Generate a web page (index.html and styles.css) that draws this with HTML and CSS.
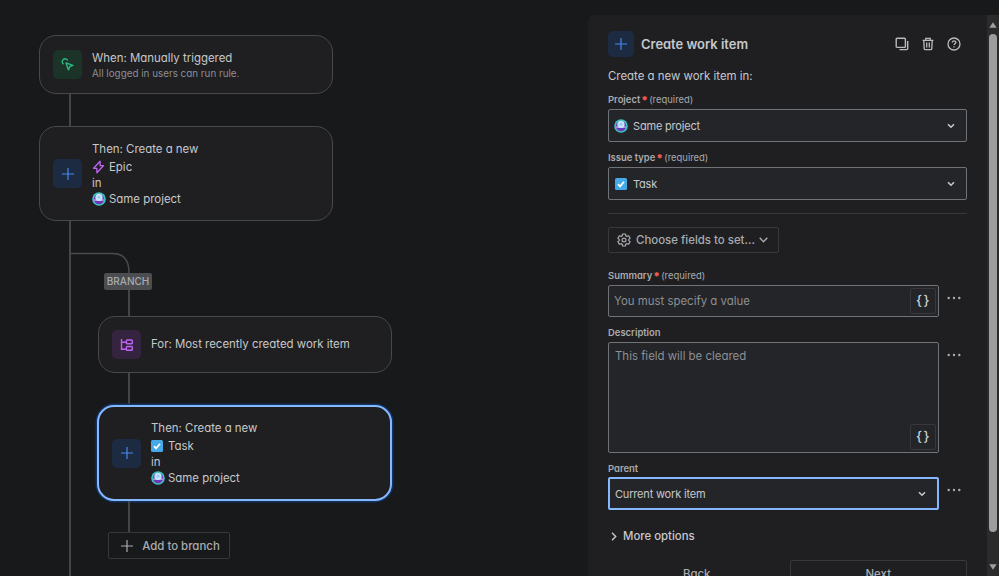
FILE: index.html
```html
<!DOCTYPE html>
<html lang="en">
<head>
<meta charset="utf-8">
<title>Automation rule</title>
<link rel="stylesheet" href="styles.css">
</head>
<body>
<svg class="defs" aria-hidden="true">
  <defs>
    <symbol id="avatar" viewBox="0 0 14 14"><circle cx="7" cy="7" r="6.8" fill="#3cc5c0"/><circle cx="7" cy="7" r="5.2" fill="#7040bd"/><path d="M1.9 7.2a5.1 5.1 0 0 0 10.2 0z" fill="#b48ce6"/><path d="M2.3 9a5.1 5.1 0 0 0 9.4 0z" fill="#6939b5"/><circle cx="7" cy="5.4" r="3.6" fill="#c3e4fa"/><circle cx="7" cy="5.2" r="1.4" fill="#9cc6ee"/></symbol>
    <symbol id="task" viewBox="0 0 12 12"><rect width="12" height="12" rx="1.5" fill="#45a9ea"/><path d="M3 6.2 5.1 8.4 9 3.8" fill="none" stroke="#fff" stroke-width="1.7"/></symbol>
    <symbol id="epic" viewBox="0 0 12 14"><path d="M7.6 1.2v4.5h3.3L4.4 12.8V8.3H1.1z" fill="none" stroke="#bf63f3" stroke-width="1.3" stroke-linejoin="round"/></symbol>
    <symbol id="plus" viewBox="0 0 12 12"><path d="M6 0v12M0 6h12" fill="none" stroke="currentColor" stroke-width="1.2"/></symbol>
    <symbol id="chev" viewBox="0 0 8 6"><path d="M1 1.2 4 4.2 7 1.2" fill="none" stroke="currentColor" stroke-width="1.6"/></symbol>
  </defs>
</svg>
<div class="app">
  <main class="canvas">
    <section class="card trigger">
      <span class="tile green"><svg width="14" height="14" viewBox="0 0 14 14" fill="none" stroke="currentColor" stroke-width="1.4" stroke-linejoin="round"><path d="M2.6 6.2A2.9 2.9 0 1 1 6.8 2.6"/><path d="m5 4.8 6.9 2.6-3.2 1.3-1.3 3.2z"/></svg></span>
      <div class="copy"><span class="t">When: Manually triggered</span><small>All logged in users can run rule.</small></div>
    </section>
    <div class="link first"></div>
    <section class="card create">
      <span class="tile blue"><svg width="12" height="12"><use href="#plus"/></svg></span>
      <div class="copy lines"><span class="t">Then: Create a new</span><span class="row"><svg width="13" height="14"><use href="#epic"/></svg>Epic</span><span class="row">in</span><span class="row"><svg class="av" width="14" height="14"><use href="#avatar"/></svg>Same project</span></div>
    </section>
    <div class="branch">
      <svg class="fork" width="60" height="52" viewBox="0 0 60 52" fill="none" stroke="#4a4b4e" stroke-width="1.5"><path d="M0 32.6h41.7q16.3 0 16.3 19.4"/></svg>
      <span class="badge">BRANCH</span>
      <div class="link second"></div>
      <section class="card for">
        <span class="tile purple"><svg width="14" height="14" viewBox="0 0 14 14" fill="none" stroke="currentColor" stroke-width="1.4"><path d="M1.5 1v10.2h4.7M1.5 4.2h4.7"/><rect x="6.4" y="2" width="5.9" height="3.7" rx=".8"/><rect x="6.4" y="8.5" width="5.9" height="3.7" rx=".8"/></svg></span>
        <div class="copy"><span class="t">For: Most recently created work item</span></div>
      </section>
      <div class="link third"></div>
      <section class="card create selected">
        <span class="tile blue"><svg width="12" height="12"><use href="#plus"/></svg></span>
        <div class="copy lines"><span class="t">Then: Create a new</span><span class="row"><svg class="tk" width="12" height="12"><use href="#task"/></svg>Task</span><span class="row">in</span><span class="row"><svg class="av" width="14" height="14"><use href="#avatar"/></svg>Same project</span></div>
      </section>
      <div class="link fourth"></div>
      <button class="add"><svg width="12" height="12"><use href="#plus"/></svg>Add to branch</button>
    </div>
  </main>
  <aside class="panel">
    <header>
      <span class="tile blue small"><svg width="12" height="12"><use href="#plus"/></svg></span>
      <h1>Create work item</h1>
      <div class="tools">
        <svg width="14" height="14" viewBox="0 0 14 14" fill="none" stroke="currentColor" stroke-width="1.4"><rect x="1.2" y="1.2" width="9.2" height="9.2" rx="1"/><path d="M12.7 4v7.6a1 1 0 0 1-1 1H4.5"/></svg>
        <svg width="14" height="14" viewBox="0 0 14 14" fill="none" stroke="currentColor" stroke-width="1.3"><path d="M1.6 3.3h10.8M4.8 3V1.3h4.4V3M2.8 3.5l.4 8.2q.1 1 1 1h5.6q.9 0 1-1l.4-8.2M5.7 5.5v5M8.3 5.5v5"/></svg>
        <svg width="14" height="14" viewBox="0 0 14 14" fill="none" stroke="currentColor" stroke-width="1.3"><circle cx="7" cy="7" r="6"/><path d="M5.2 5.6C5.2 3.2 8.8 3.3 8.8 5.4c0 1.3-1.8 1.3-1.8 2.7M7 9.2v1.3"/></svg>
      </div>
    </header>
    <p class="intro">Create a new work item in:</p>
    <label class="l-project">Project<b>*</b><i>(required)</i></label>
    <div class="field select"><svg width="14" height="14"><use href="#avatar"/></svg><span>Same project</span><svg class="chev" width="8" height="6"><use href="#chev"/></svg></div>
    <label class="l-issue">Issue type<b>*</b><i>(required)</i></label>
    <div class="field select"><svg class="check" width="12" height="12"><use href="#task"/></svg><span>Task</span><svg class="chev" width="8" height="6"><use href="#chev"/></svg></div>
    <hr>
    <button class="choose"><svg width="14" height="14" viewBox="0 0 14 14" fill="none" stroke="currentColor" stroke-width="1.2" stroke-linejoin="round"><path d="M5.6 1h2.8l.4 1.8 1.1.6 1.8-.6 1.4 2.4L11.8 6.4v1.2l1.3 1.2-1.4 2.4-1.8-.6-1.1.6-.4 1.8H5.6l-.4-1.8-1.1-.6-1.8.6L.9 8.8l1.3-1.2V6.4L.9 5.2l1.4-2.4 1.8.6 1.1-.6z"/><circle cx="7" cy="7" r="1.9"/></svg><span>Choose fields to set...</span><svg class="wide" width="9" height="6" viewBox="0 0 9 6"><path d="M.7.8 4.5 4.7 8.3.8" fill="none" stroke="currentColor" stroke-width="1.4"/></svg></button>
    <label class="l-summary">Summary<b>*</b><i>(required)</i></label>
    <div class="line"><div class="field input"><span>You must specify a value</span><em>{}</em></div><svg class="dots" width="14" height="4" viewBox="0 0 14 4" fill="currentColor"><circle cx="1.7" cy="2" r="1.2"/><circle cx="7" cy="2" r="1.2"/><circle cx="12.3" cy="2" r="1.2"/></svg></div>
    <label class="l-desc">Description</label>
    <div class="line"><div class="field area"><span>This field will be cleared</span><em>{}</em></div><svg class="dots" width="14" height="4" viewBox="0 0 14 4" fill="currentColor"><circle cx="1.7" cy="2" r="1.2"/><circle cx="7" cy="2" r="1.2"/><circle cx="12.3" cy="2" r="1.2"/></svg></div>
    <label class="l-parent">Parent</label>
    <div class="line"><div class="field select focus"><span>Current work item</span><svg class="chev" width="8" height="6"><use href="#chev"/></svg></div><svg class="dots" width="14" height="4" viewBox="0 0 14 4" fill="currentColor"><circle cx="1.7" cy="2" r="1.2"/><circle cx="7" cy="2" r="1.2"/><circle cx="12.3" cy="2" r="1.2"/></svg></div>
    <div class="more"><svg width="6" height="9" viewBox="0 0 6 9"><path d="M1 .8 4.7 4.5 1 8.2" fill="none" stroke="currentColor" stroke-width="1.4"/></svg>More options</div>
    <footer><button class="back">Back</button><button class="next">Next</button></footer>
  </aside>
  <div class="scroll"><svg width="8" height="6" viewBox="0 0 8 6"><path d="M4 .3 7.7 5.7H.3z" fill="#a0a0a0"/></svg><span></span><svg width="8" height="6" viewBox="0 0 8 6"><path d="M4 5.7 7.7.3H.3z" fill="#a0a0a0"/></svg></div>
</div>
</body>
</html>
```
FILE: styles.css
```css
* { box-sizing: border-box; }
body { margin: 0; width: 999px; height: 576px; overflow: hidden; background: #18191a; color: #c6c8cb; font: 11.43px/16px Inter, "Liberation Sans", sans-serif; font-feature-settings: "cv11"; }
svg { display: block; flex: none; }
.defs { position: absolute; width: 0; height: 0; }
button { font: inherit; font-weight: 500; color: inherit; background: none; border: 1px solid #37383b; border-radius: 2px; padding: 0; }
.app { display: flex; height: 576px; }
.canvas { width: 588px; padding: 35px 0 0 39px; }
.card { width: 294px; border: 1px solid #47484b; border-radius: 17px; background: #1f1f21; display: flex; align-items: center; padding-left: 13px; gap: 10px; }
.trigger { height: 59px; }
.trigger .copy, .lines { padding-top: 1px; }
.create { height: 95px; }
.for { height: 57px; }
.for .copy { padding-bottom: 1px; }
.selected { width: 295px; height: 96px; margin-left: -1px; border: 2px solid #85b8ff; box-shadow: 0 0 0 1.5px #123263; }
.selected .lines { padding: 0; }
.tile { width: 29px; height: 29px; border-radius: 5px; display: grid; place-items: center; flex: none; }
.green { background: #1c3329; color: #2abb7f; }
.blue { background: #1c2b42; color: #4688ec; }
.purple { background: #35243f; color: #bf63f3; }
.small { width: 26px; height: 26px; }
.copy { display: flex; flex-direction: column; }
.copy small { font-size: 9.85px; line-height: 15px; color: #8c8f94; }
.row { display: flex; align-items: center; gap: 4px; height: 16.3px; }
.row .tk { margin-right: 1px; }
.row .av { margin-right: -1px; }
.lines .t { height: 18px; }
.link { width: 2px; background: #444548; }
.first { height: 32px; margin-left: 30px; }
.branch { margin-left: 30px; height: 356px; border-left: 2px solid #444548; padding-left: 27px; }
.fork { margin-left: -27px; }
.badge { display: block; width: 48px; height: 17px; margin-left: 6px; border-radius: 2px; background: #4b4d51; color: #a9abaf; font-size: 10px; font-weight: 500; line-height: 17px; text-align: center; }
.second { height: 26px; margin-left: 30px; }
.third { height: 32px; margin-left: 30px; }
.fourth { height: 31px; margin-left: 30px; }
.add { width: 122px; height: 27px; margin-left: 10px; padding-left: 3px; display: flex; align-items: center; justify-content: center; gap: 9px; color: #a9abaf; }
.trigger .copy { padding-top: 2px; }
.panel { width: 399px; height: 561px; margin-top: 15px; padding: 15px 20px 0; background: #1f1f21; border-radius: 6px 0 0 0; overflow: hidden; }
header { display: flex; align-items: center; height: 27px; gap: 7px; }
h1 { margin: 0; font-size: 12.95px; font-weight: 600; padding-top: 1px; }
.tools { display: flex; gap: 12px; margin: 0 6px 0 auto; color: #b9bbbe; }
.intro { margin: 11px 0 9px; height: 16px; font-size: 11.43px; }
label { display: flex; height: 14px; line-height: 14px; font-size: 9.45px; font-weight: 600; color: #a9abaf; margin-bottom: 2px; }
label b { color: #f15b50; font-size: 11px; line-height: 15px; margin: 0 2px 0 1px; letter-spacing: -.8px; }
label i { font-style: normal; font-weight: 400; }
.field { height: 33px; border: 1px solid #6f7277; border-radius: 2px; background: #242528; display: flex; align-items: center; padding: 0 5px 0 6px; gap: 5px; }
.field > svg:first-child { margin-left: -1px; }
.select .chev { margin: 0 6px 0 auto; }
.select span { font-size: 11px; letter-spacing: -.18px; }
.field > .check:first-child { margin: 0 1px 0 0; }
.l-issue { margin-top: 9px; }
hr { border: 0; border-top: 1px solid #37383b; margin: 13px 0; }
.choose { width: 171px; height: 26px; display: flex; align-items: center; padding-left: 8px; gap: 5px; color: #a9abaf; }
.choose span { font-size: 11.43px; }
.choose .wide { margin-left: -1px; }
.l-summary { margin-top: 16px; }
.line { display: flex; gap: 8px; }
.line .field { width: 331px; padding-left: 5px; }
.line .dots { margin-top: 11px; color: #a9abaf; }
.line .input { height: 32px; }
.input, .area { color: #8c8f94; justify-content: space-between; }
.field em { width: 26px; height: 26px; margin-right: -3px; border: 1px solid #37383b; border-radius: 2px; color: #cecfd2; font: 500 13.5px/23px Inter, sans-serif; letter-spacing: 1.5px; text-align: center; padding-left: 1px; }
.l-desc { margin-top: 9px; }
.line .area { height: 111px; align-items: flex-start; padding: 5px 5px 2px 6px; }
.area em { align-self: flex-end; }
.l-parent { margin-top: 9px; margin-bottom: 1px; }
.line .focus { border: 2px solid #85b8ff; }
.more { display: flex; align-items: center; gap: 6px; margin: 18px 0 16px 3px; height: 16px; font-size: 11.4px; font-weight: 500; }
footer { display: flex; gap: 4px; }
footer button { width: 178px; height: 27px; color: #a9abaf; }
.back { border-color: transparent; }
.scroll { width: 12px; height: 561px; margin-top: 15px; background: #2b2b2c; display: flex; flex-direction: column; align-items: center; padding: 7px 1px 6px 0; }
.scroll span { width: 8px; height: 498px; margin: 6px 0 auto; border-radius: 4px; background: #9d9d9d; }
```
